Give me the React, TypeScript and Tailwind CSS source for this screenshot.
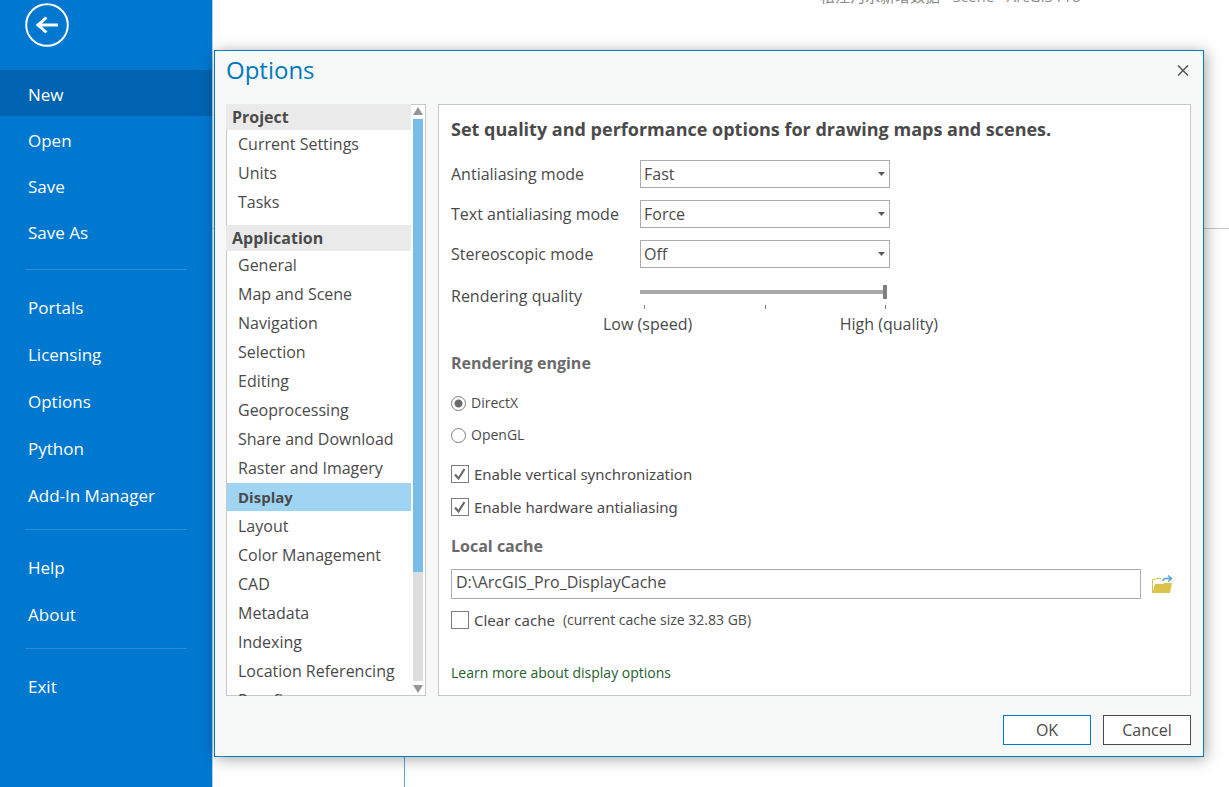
import { useState } from 'react'

const menuGroups = [
  ['Portals', 'Licensing', 'Options', 'Python', 'Add-In Manager'],
  ['Help', 'About'],
  ['Exit'],
]

const sections = [
  { title: 'Project', items: ['Current Settings', 'Units', 'Tasks'] },
  {
    title: 'Application',
    items: [
      'General',
      'Map and Scene',
      'Navigation',
      'Selection',
      'Editing',
      'Geoprocessing',
      'Share and Download',
      'Raster and Imagery',
      'Display',
      'Layout',
      'Color Management',
      'CAD',
      'Metadata',
      'Indexing',
      'Location Referencing',
      'Proofing',
    ],
  },
]

function Sidebar() {
  return (
    <nav className="w-[212px] shrink-0 bg-[#0078d0] text-[17px] text-white">
      <button aria-label="Back" className="mt-[3px] ml-[25px] block">
        <svg width="44" height="44" viewBox="0 0 44 44" fill="none" stroke="white">
          <circle cx="22" cy="22" r="20.8" strokeWidth="2" />
          <path d="M33 22H13" strokeWidth="3" />
          <path d="M21.5 14.5L13 22l8.500 7.500" strokeWidth="3" />
        </svg>
      </button>
      <div className="mt-[23px] pb-1">
        {['New', 'Open', 'Save', 'Save As'].map((item) => (
          <button
            key={item}
            className={`block h-[46px] w-full pt-1 pl-7 text-left ${item === 'New' ? 'bg-[#0063b1]' : ''}`}
          >
            {item}
          </button>
        ))}
      </div>
      {menuGroups.map((group, i) => (
        <div key={i}>
          <hr className="mx-[25px] mt-[11px] mb-[13px] border-[#2e8bd8]" />
          {group.map((item) => (
            <button key={item} className="block h-[47px] w-full pt-[2px] pl-7 text-left">
              {item}
            </button>
          ))}
        </div>
      ))}
    </nav>
  )
}

function CategoryList({ active, onSelect }: { active: string; onSelect: (s: string) => void }) {
  return (
    <div className="flex h-[592px] w-[200px] shrink-0 border-b border-[#c8c8c8] bg-white">
      <div className="-mb-px w-[185px] overflow-hidden">
        {sections.map((section) => (
          <div key={section.title}>
            <h2 className="h-[26px] bg-[#eaeaea] pl-[6px] leading-[26px] font-bold">{section.title}</h2>
            <ul className="border-l border-[#c8c8c8] pb-2">
              {section.items.map((item) => (
                <li key={item} className="pb-px">
                  <button
                    onClick={() => onSelect(item)}
                    className={`block h-7 w-full pl-[11px] text-left whitespace-nowrap ${
                      item === active ? 'bg-[#9fd4f3] text-[15px] font-bold' : ''
                    }`}
                  >
                    {item}
                  </button>
                </li>
              ))}
            </ul>
          </div>
        ))}
      </div>
      <div className="flex flex-1 flex-col border-t border-r border-[#c8c8c8] px-[2px]">
        <svg className="mt-[2px] mb-1 h-2 w-[10px]" viewBox="0 0 10 8">
          <path d="M5 0L10 8H0z" fill="#969696" />
        </svg>
        <div className="w-[10px] flex-1 bg-[#dedede]">
          <div className="h-[453px] bg-[#78bce8]" />
        </div>
        <svg className="mt-1 mb-[2px] h-2 w-[10px]" viewBox="0 0 10 8">
          <path d="M0 0H10L5 8z" fill="#969696" />
        </svg>
      </div>
    </div>
  )
}

function SelectRow({ id, label, options }: { id: string; label: string; options: string[] }) {
  return (
    <div className="mb-3 flex items-center">
      <label htmlFor={id} className="w-[189px]">
        {label}
      </label>
      <div className="relative">
        <select id={id} className="h-7 w-[250px] appearance-none border border-[#ababab] bg-white pl-[3px]">
          {options.map((o) => (
            <option key={o}>{o}</option>
          ))}
        </select>
        <svg className="pointer-events-none absolute top-3 right-[5px] h-1 w-[7px]" viewBox="0 0 7 4">
          <path d="M0 0H7L3.500 4z" fill="#5a5a5a" />
        </svg>
      </div>
    </div>
  )
}

function QualitySlider() {
  const [value, setValue] = useState(2)

  return (
    <div className="flex items-start">
      <label htmlFor="quality" className="mt-[5px] w-[189px]">
        Rendering quality
      </label>
      <div className="w-[250px] pt-1">
        <input
          id="quality"
          type="range"
          min={0}
          max={2}
          value={value}
          onChange={(e) => setValue(Number(e.target.value))}
          className="block h-4 w-[247px] appearance-none bg-[linear-gradient(#a9a9a9,#a9a9a9)] bg-[length:100%_4px] bg-center bg-no-repeat [&::-webkit-slider-thumb]:h-[14px] [&::-webkit-slider-thumb]:w-1 [&::-webkit-slider-thumb]:appearance-none [&::-webkit-slider-thumb]:bg-[#808080]"
        />
        <div className="mx-1 mt-[5px] flex justify-between">
          <span className="h-1 w-px bg-[#808080]" />
          <span className="h-1 w-px bg-[#808080]" />
          <span className="h-1 w-px bg-[#808080]" />
        </div>
        <div className="mt-1 -mr-12 -ml-[37px] flex justify-between">
          <span>Low (speed)</span>
          <span>High (quality)</span>
        </div>
      </div>
    </div>
  )
}

function Check({ label, checked, className = '' }: { label: string; checked?: boolean; className?: string }) {
  return (
    <label className={`flex items-center gap-[5px] font-['Noto_Sans'] text-[15px] leading-[22px] ${className}`}>
      <span className="grid">
        <input
          type="checkbox"
          defaultChecked={checked}
          className="peer col-start-1 row-start-1 size-[18px] appearance-none border border-[#7d7d7d] bg-white"
        />
        <svg
          className="pointer-events-none invisible col-start-1 row-start-1 size-[18px] peer-checked:visible"
          viewBox="0 0 18 18"
          fill="none"
          stroke="#6a6a6a"
        >
          <path d="M4 9.500L7.500 13.500L13.500 4" strokeWidth="2.200" />
        </svg>
      </span>
      {label}
    </label>
  )
}

function Radio({ label, checked }: { label: string; checked?: boolean }) {
  return (
    <label className="flex h-8 items-center gap-[5px] text-sm">
      <input
        type="radio"
        name="engine"
        defaultChecked={checked}
        className="size-[15px] appearance-none rounded-full border border-[#7d7d7d] bg-white checked:bg-[radial-gradient(circle,#6a6a6a_3.5px,white_4.5px)]"
      />
      {label}
    </label>
  )
}

function DisplayPanel() {
  const [cachePath, setCachePath] = useState('D:\\ArcGIS_Pro_DisplayCache')

  return (
    <section className="min-w-0 flex-1 border border-[#c8c8c8] bg-white px-3">
      <h2 className="mt-3 mb-[19px] text-lg leading-6 font-bold whitespace-nowrap">
        Set quality and performance options for drawing maps and scenes.
      </h2>
      <SelectRow id="aa" label="Antialiasing mode" options={['Fast', 'None', 'Best']} />
      <SelectRow id="text-aa" label="Text antialiasing mode" options={['Force', 'Normal', 'None']} />
      <SelectRow id="stereo" label="Stereoscopic mode" options={['Off', 'Anaglyph']} />
      <QualitySlider />

      <h3 className="mt-4 mb-3 leading-6 font-bold text-[#6a6a6a]">Rendering engine</h3>
      <Radio label="DirectX" checked />
      <Radio label="OpenGL" />
      <Check label="Enable vertical synchronization" checked className="mt-3" />
      <Check label="Enable hardware antialiasing" checked className="mt-[11px]" />

      <h3 className="mt-4 mb-[11px] leading-6 font-bold text-[#6a6a6a]">Local cache</h3>
      <div className="flex items-center">
        <input
          type="text"
          aria-label="Local cache"
          value={cachePath}
          onChange={(e) => setCachePath(e.target.value)}
          className="h-[30px] min-w-0 flex-1 border border-[#ababab] bg-white pb-1 pl-1"
        />
        <button aria-label="Browse" className="mr-[5px] ml-[11px]">
          <svg width="21" height="19" viewBox="0 0 21 19" fill="none">
            <path d="M0.500 17V4.500H3l1-1h5v1" stroke="#d9c34a" />
            <path d="M3 9h8l1-1h8l-2 10H0l1-2z" fill="#d9c34a" />
            <path d="M10.500 6l2-2.500H19M16 0.500l3.500 3-3.500 3" stroke="#4ea3d9" strokeWidth="1.400" />
          </svg>
        </button>
      </div>
      <div className="mt-[10px] flex items-center gap-2">
        <Check label="Clear cache" />
        <span className="text-sm">(current cache size 32.83 GB)</span>
      </div>
      <a href="#" className="mt-8 block w-fit text-sm text-[#1f6030]">
        Learn more about display options
      </a>
    </section>
  )
}

function OptionsDialog() {
  const [active, setActive] = useState('Display')

  return (
    <div
      role="dialog"
      aria-label="Options"
      className="absolute top-[50px] right-[25px] left-[214px] border border-[#0079c1] bg-[#f7f9f8] pr-3 pb-[11px] pl-[11px] text-base leading-[22px] text-[#4a4a4a] shadow-[2px_2px_14px_rgba(0,0,0,0.35)]"
    >
      <header className="flex h-[53px] items-start justify-between">
        <h1 className="mt-[3px] text-2xl leading-8 text-[#0079c1]">Options</h1>
        <button aria-label="Close" className="mt-[14px] mr-[2px]">
          <svg width="12" height="11" viewBox="0 0 12 11" stroke="#5a5a5a" strokeWidth="1.600">
            <path d="M1 0.500l10 10M11 0.500l-10 10" />
          </svg>
        </button>
      </header>
      <div className="flex gap-3">
        <CategoryList active={active} onSelect={setActive} />
        <DisplayPanel />
      </div>
      <footer className="mt-[19px] flex justify-end gap-3">
        <button className="h-[30px] w-[88px] border border-[#0078d0] bg-white">OK</button>
        <button className="h-[30px] w-[88px] border border-[#4a4a4a] bg-white">Cancel</button>
      </footer>
    </div>
  )
}

export default function App() {
  return (
    <div className="relative flex min-h-screen overflow-hidden bg-white font-['Open_Sans','Noto_Sans_CJK_SC',sans-serif]">
      <Sidebar />
      <main className="flex flex-1 flex-col border-l border-[#a9d0ef]">
        <div className="h-[229px] border-b border-[#c8c8c8]">
          <p className="-mt-[14px] ml-[607px] text-[15px] leading-5 whitespace-nowrap text-[#8a8a8a]">
            松江河水新增数据 - Scene - ArcGIS Pro
          </p>
        </div>
        <div className="w-[192px] flex-1 border-r border-[#5aa9dc]" />
      </main>
      <OptionsDialog />
    </div>
  )
}
